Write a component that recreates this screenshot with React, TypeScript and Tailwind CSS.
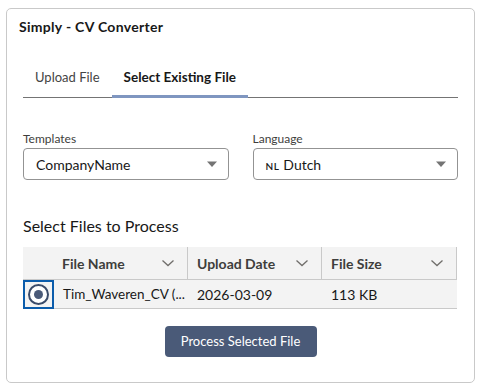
import { useState } from 'react'

const FONT = { fontFamily: '"Segoe UI", Lato, "Noto Sans", sans-serif' }

function Caret() {
  return (
    <svg width="12" height="8" viewBox="0 0 12 8" className="shrink-0">
      <path d="M1 1.5h10L6 7z" fill="#747474" />
    </svg>
  )
}

function Chevron() {
  return (
    <svg width="14" height="8" viewBox="0 0 14 8" className="shrink-0">
      <path d="M1.5 1.5L7 6.5l5.5-5" fill="none" stroke="#706e6b" strokeWidth="1.3" />
    </svg>
  )
}

function SelectBox({ label, children }: { label: string; children: React.ReactNode }) {
  return (
    <div className="flex-1">
      <div className="text-[12px] leading-[16px] text-[#3e3e3c] mb-[1px]">{label}</div>
      <div className="h-[32px] flex items-center justify-between pl-[12px] pr-[10px] border border-[#939393] rounded-[4px] bg-white">
        <div className="text-[14px] text-[#181818]">{children}</div>
        <Caret />
      </div>
    </div>
  )
}

const COLUMNS = [
  { key: 'name', label: 'File Name', width: 'w-[135px]' },
  { key: 'date', label: 'Upload Date', width: 'w-[134px]' },
  { key: 'size', label: 'File Size', width: 'w-[135px]' },
]

export default function App() {
  const [tab, setTab] = useState('existing')
  const [selected, setSelected] = useState(true)

  const tabClass = (active: boolean) =>
    `px-[12px] -mb-[1px] ${active ? 'text-[13.5px] font-bold text-[#181818] border-b-[3px] border-[#7f96c0]' : 'text-[13px] text-[#444444] border-b-[3px] border-transparent'}`

  return (
    <div className="w-[481px] h-[389px] bg-white pt-[8px] px-[6px]" style={FONT}>
      <div className="h-[375px] border border-[#c9c9c9] rounded-[5px] bg-white">
        <div className="px-[12px] pt-[9px] text-[14px] tracking-[0.3px] font-bold text-[#181818] leading-[18px]">
          Simply - CV Converter
        </div>

        {/* Tabs */}
        <div className="mx-[16px] mt-[24px] flex border-b border-[#747474] h-[38px]">
          <button onClick={() => setTab('upload')} className={tabClass(tab === 'upload')}>
            Upload File
          </button>
          <button onClick={() => setTab('existing')} className={tabClass(tab === 'existing')}>
            Select Existing File
          </button>
        </div>

        {/* Selects */}
        <div className="mx-[16px] mt-[33px] flex gap-[24px]">
          <SelectBox label="Templates">CompanyName</SelectBox>
          <SelectBox label="Language">
            <span className="text-[10px] font-semibold tracking-[0.5px] mr-[4px]">NL</span>Dutch
          </SelectBox>
        </div>

        <div className="mx-[16px] mt-[36px] text-[16px] leading-[20px] text-[#181818]">Select Files to Process</div>

        {/* Table */}
        <div className="mx-[16px] mt-[11px] w-[434px]">
          <div className="flex h-[33px] bg-[#f3f3f3] border-b border-[#c9c9c9]">
            <div className="w-[30px]" />
            {COLUMNS.map((c) => (
              <div
                key={c.key}
                className={`${c.width} flex items-center justify-between pl-[9px] pr-[12px] border-r border-[#c9c9c9] first:pl-[10px]`}
              >
                <span className="text-[14px] font-bold text-[#3e3e3c]">{c.label}</span>
                <Chevron />
              </div>
            ))}
          </div>
          <div className="flex h-[29px] bg-[#f3f3f3] border-b border-[#c9c9c9] items-center">
            <button
              onClick={() => setSelected(!selected)}
              className="w-[31px] h-[29px] flex items-center justify-center border-2 border-[#0b5cab]"
            >
              <span className="w-[21px] h-[21px] rounded-full border-2 border-[#3a4b69] bg-white flex items-center justify-center">
                {selected && <span className="w-[9px] h-[9px] rounded-full bg-[#4a5a78]" />}
              </span>
            </button>
            <div className="w-[134px] pl-[9px] text-[13.5px] text-[#181818] whitespace-nowrap overflow-hidden">Tim_Waveren_CV (...</div>
            <div className="w-[134px] pl-[9px] text-[14px] text-[#181818]">2026-03-09</div>
            <div className="w-[135px] pl-[9px] text-[14px] text-[#181818]">113 KB</div>
          </div>
        </div>

        <div className="flex justify-center mt-[17px]">
          <button className="w-[152px] h-[31px] rounded-[4px] bg-[#4a5a78] text-white text-[13px]">
            Process Selected File
          </button>
        </div>
      </div>
    </div>
  )
}
